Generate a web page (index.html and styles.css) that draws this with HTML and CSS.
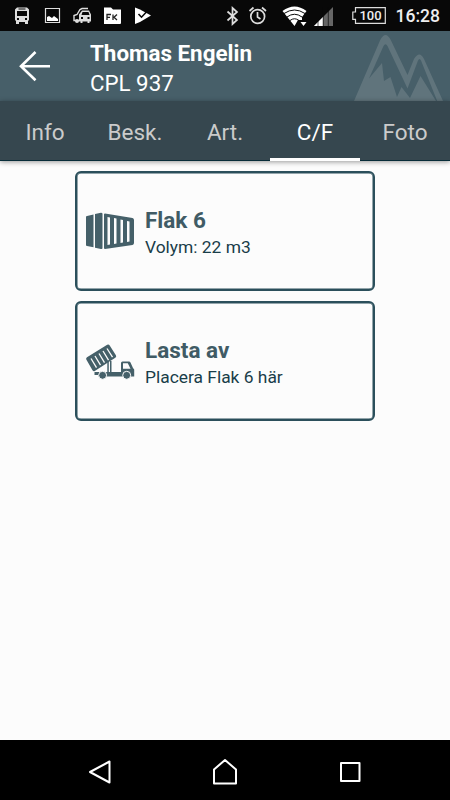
FILE: index.html
```html
<!DOCTYPE html>
<html lang="sv">
<head>
<meta charset="utf-8">
<title>CPL 937</title>
<link rel="stylesheet" href="styles.css">
</head>
<body>
<div class="screen">
  <div class="status">
    <div class="status-group">
      <svg width="30" height="31" viewBox="7 0 30 31"><path fill="#ddd" fill-rule="evenodd" d="M17 7.500h10l2 2V20l-1 1v3h-3v-2h-6v2h-3v-3l-1-1V9.500zM17 11v5h10v-5zM18.500 8.500v1h7v-1zM17 18v2h2v-2zM25 18v2h2v-2z"/></svg>
      <svg width="30" height="31" viewBox="37 0 30 31"><path fill="none" stroke="#ddd" stroke-width="1.200" d="M45.500 8.500h14v14h-14z"/><path fill="#fff" d="M47 21v-4l2-1 3 2 2-2 4 3v2z"/></svg>
      <svg width="30" height="31" viewBox="67 0 30 31"><path fill="none" stroke="#ddd" stroke-width="1.400" d="M79 20.500h-5v-5l3-1 3-5 2-1h6"/><circle cx="77" cy="21" r="2" fill="#ddd"/><path fill="#ddd" fill-rule="evenodd" d="M82 10.500h7l2 4v7h-1.500V23h-2v-1.500h-5V23h-2v-1.500H79v-7zM82.500 12l-1 3h8l-1-3zM81 17v2h2v-2zM87.500 17v2h2v-2z"/></svg>
      <svg width="30" height="31" viewBox="97 0 30 31"><path fill="#fff" d="M104 7.500h7l2 2h8v13.500q0 1-1 1h-16z"/><path fill="none" stroke="#222" stroke-width="1.300" d="M107 20v-5.500h4M107 17.300h3M113 14.500V20M117 14.500l-3 2.800 3 2.700"/></svg>
      <svg width="30" height="31" viewBox="127 0 30 31"><path fill="#fff" d="M135 7.500l5 2 11 6-11 6.500-5 2z"/><path fill="none" stroke="#080808" stroke-width="1.600" d="M138.500 14l3 3.200 7-7.500"/></svg>
    </div>
    <div class="status-group">
      <svg width="25" height="31" viewBox="220 0 25 31"><path fill="none" stroke="#ddd" stroke-width="1.700" d="M227.500 11.500l9.500 8.500-4.500 4V8l4.500 4-9.500 8.500"/></svg>
      <svg width="28" height="31" viewBox="245 0 28 31"><g fill="none" stroke="#ddd" stroke-width="1.700"><circle cx="257.700" cy="16.500" r="6.900"/><path d="M257.500 12v5l3 2M249.500 11l4-3.500M266 11l-4-3.500"/></g></svg>
      <svg width="38" height="31" viewBox="273 0 38 31"><path fill="#fff" d="M282.500 11q12-9 24 0l-4.500 6v3h-4l-3.500 6z"/><g fill="none" stroke="#080808" stroke-width="1"><path d="M284 13.500q10.500-7 21 0M287 17q7.500-5.500 15 0M290 20.500q4.500-3.500 9 0"/></g><path fill="#fff" d="M300.500 22h6l-3 4z"/></svg>
      <svg width="35" height="31" viewBox="311 0 35 31"><path fill="#666" d="M333 7v19h-19z"/><path fill="#fff" d="M323 17v9h-9z"/><path stroke="#080808" stroke-width=".7" d="M318 7v19M323.200 7v19M328.300 7v19"/></svg>
      <div class="battery"><svg width="34" height="17" viewBox="0 0 34 17"><path fill="none" stroke="#ddd" stroke-width="1.200" d="M3.500.7h29.800v15.600H3.500v-4H.8V5h2.700z"/></svg><span>100</span></div>
      <span class="clock">16:28</span>
    </div>
  </div>

  <header class="header">
    <svg class="back" width="32" height="32" viewBox="0 0 32 32"><path fill="none" stroke="#fff" stroke-width="2.600" d="M31 16.200H2M16.500 2L2 16.200l14.500 14"/></svg>
    <div class="titles"><div class="name">Thomas Engelin</div><div class="plate">CPL 937</div></div>
    <svg class="logo" width="92" height="66" viewBox="354 35 92 66"><path fill="#60747c" d="M354 101l26-60.500q5.500-11 11 0L407.500 75l6.500-16q5.500-9 10 0L443 101h-5.800L421 60.500q-1.500-3-3 0L407.500 88.500 387.500 46q-2-3.500-4 0L369 78.500l13-15.500 2 18 6.500-4L397 97l4.500-10 8.500 11 10.500-22L436 101z"/></svg>
  </header>

  <nav class="tabs">
    <a class="tab">Info</a><a class="tab">Besk.</a><a class="tab">Art.</a><a class="tab active">C/F</a><a class="tab">Foto</a>
  </nav>

  <main class="content">
    <section class="card">
      <svg width="50" height="50" viewBox="85 206 50 50"><g fill="#456069"><path d="M87 216l6.500-1.500v32.700L87 246q-1 0-1-1v-28q0-1 1-1zM95 214l6-1.300q1.500 0 1.500 1v34.500q0 1-1.500.8l-6-1.300z"/><path fill-rule="evenodd" d="M105 213.500l27.500 4.500q1.500.3 1.500 2v23q0 1.500-1.500 2L105 249q-1 0-1-1v-33.500q0-1 1-1zM107.500 217v28l2.500-.5v-27zM114 218v26l2.500-.5v-25zM120.500 219.500v23.500l2.500-.5v-22.500zM127 221v21l2.500-.5v-20z"/></g></svg>
      <div class="text"><h2>Flak 6</h2><p>Volym: 22 m3</p></div>
    </section>
    <section class="card">
      <svg width="50" height="50" viewBox="85 336 50 50"><g fill="#456069"><path d="M87 357.200l20.200-12.500q1.500-.8 2.500.7l6.200 9.800q.9 1.500-.6 2.500l-20.500 13.200q-1.500.8-2.300-.7l-6.200-10.700q-.6-1.300.7-2.300z"/><path d="M107.300 361h1.500v11h-1.500zM110 361h1.500v11H110z"/><path d="M94.500 372H121V363q0-1.500 1.500-1.500h6.500q1 0 1.500 1l2.500 5.500 1.200 1.500v7H94.500z"/></g><path fill="#fcfcfc" d="M123 363.300h4.800l2.700 5.500H123zM94 375h4.500v3H94z"/><g fill="#456069" stroke="#fcfcfc" stroke-width="1"><circle cx="102.600" cy="375.300" r="4"/><circle cx="126.700" cy="375.300" r="4"/></g><g stroke="#fcfcfc" stroke-width="1.300"><path d="M91 358.500l5.500 9.200M95 356l5.500 9.200M99 353.500l5.500 9.200M103 351l5.500 9.200M107 348.500l5.500 8.700"/></g></svg>
      <div class="text"><h2>Lasta av</h2><p>Placera Flak 6 här</p></div>
    </section>
  </main>

  <footer class="navbar">
    <svg width="30" height="30" viewBox="0 0 30 30"><path d="M24.500 4.500v21L5 15z"/></svg>
    <svg width="30" height="30" viewBox="0 0 30 30"><path d="M15 3l11 9.500V26.500H4V12.500z"/></svg>
    <svg width="30" height="30" viewBox="0 0 30 30"><path d="M6 6h18.500v18H6z"/></svg>
  </footer>
</div>
</body>
</html>
```
FILE: styles.css
```css
* { box-sizing: border-box; margin: 0; padding: 0; }
body { font-family: Roboto, sans-serif; background: #fcfcfc; }
svg { display: block; flex: none; }
.screen { width: 450px; height: 800px; display: flex; flex-direction: column; overflow: hidden; }
.status { height: 31px; flex: none; background: #080808; color: #eee; display: flex; justify-content: space-between; padding: 0 11px 0 7px; }
.status-group { display: flex; align-items: center; }
.battery { position: relative; width: 34px; margin: 0 9.500px 0 6px; }
.battery span { position: absolute; left: 3px; right: 0; top: 0; text-align: center; font-size: 13px; line-height: 17px; font-weight: 500; }
.clock { width: 43.500px; font-size: 17.500px; line-height: 31px; padding-top: 1px; font-weight: 500; white-space: nowrap; }
.header { height: 70px; flex: none; background: #475f69; color: #fff; display: flex; align-items: center; padding: 0 4px 0 19px; }
.titles { margin-left: 39px; flex: 1; font-size: 22.300px; line-height: 30px; padding-top: 4px; white-space: nowrap; }
.name { font-weight: 700; font-size: 22.400px; }
.logo { align-self: flex-end; }
.tabs { position: relative; height: 60px; flex: none; background: #36474f; border-bottom: 1px solid #082d39; display: grid; grid-template-columns: repeat(5, 1fr); box-shadow: 0 1px 5px rgba(0, 0, 0, .4); }
.tab { color: #cbcbcb; text-align: center; font-size: 22.500px; line-height: 62px; height: 60px; }
.active { color: #fff; border-bottom: 3px solid #fff; }
.content { flex: 1; background: #fcfcfc; display: flex; flex-direction: column; align-items: center; gap: 10px; padding-top: 10px; }
.card { width: 300px; height: 120px; border: 2px solid #2b4f5b; border-radius: 6px; box-shadow: inset 0 0 0 .5px #2b4f5b; display: flex; align-items: center; padding-left: 8px; }
.text { margin-left: 10px; padding-top: 4px; color: #193d49; }
.text h2 { color: #405b65; font-size: 22.500px; line-height: 27px; font-weight: 700; }
.text p { font-size: 17.400px; line-height: 26px; }
.navbar { height: 60px; flex: none; background: #000; display: flex; justify-content: space-between; align-items: center; padding: 3px 85px 0; }
.navbar path { fill: none; stroke: #fff; stroke-width: 2; stroke-linejoin: round; }
```
